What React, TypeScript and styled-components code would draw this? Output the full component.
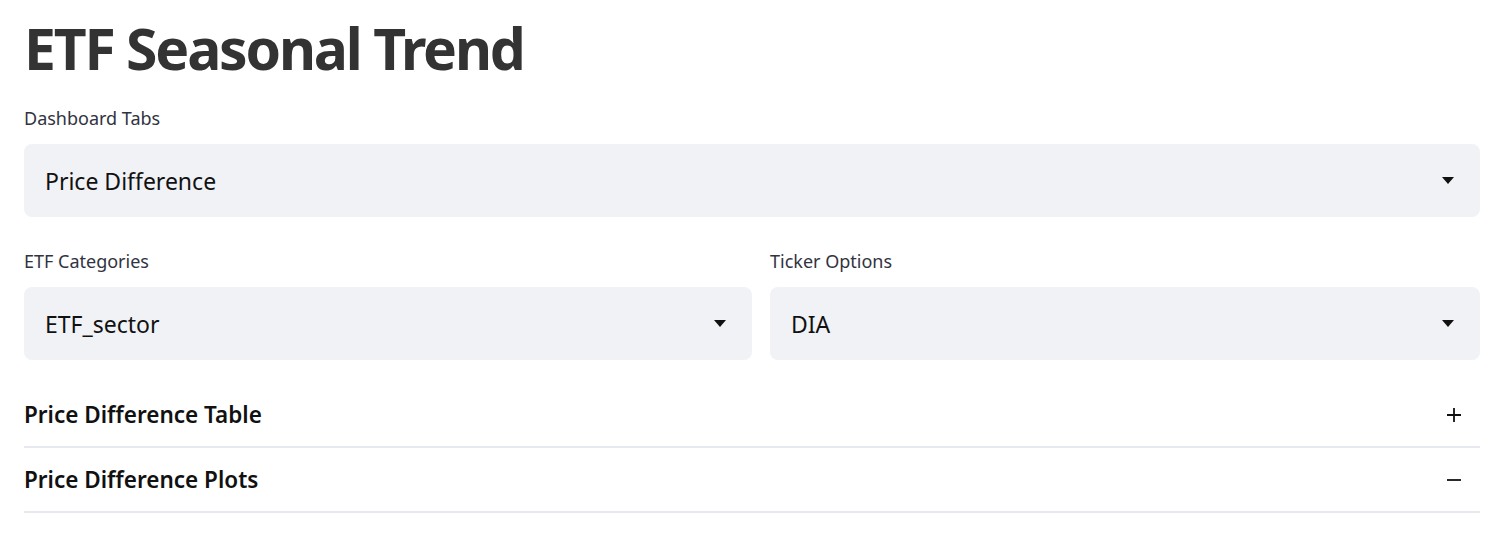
import { createGlobalStyle, styled } from "styled-components"

const Global = createGlobalStyle`
    body {
        margin: 0;
        background: #ffffff;
        font-family: "Noto Sans", "Open Sans", sans-serif;
        color: #31333f;
    }
`

const Page = styled.div`
    padding: 12px 20px 0 24px;
`

const Title = styled.h1`
    font-size: 57px;
    font-weight: 700;
    line-height: 72px;
    margin: 0 0 22px;
    color: #333333;
    letter-spacing: -2.2px;
`

const Field = styled.div`
    display: flex;
    flex-direction: column;
    gap: 14px;
    margin-bottom: 32px;
`

const Label = styled.label`
    font-size: 18px;
    line-height: 24px;
    color: #31333f;
`

const Select = styled.div`
    display: flex;
    align-items: center;
    justify-content: space-between;
    height: 73px;
    padding: 0 26px 0 21px;
    box-sizing: border-box;
    background: #f0f2f6;
    border-radius: 8px;
    font-size: 23px;
    color: #111111;
`

const Row = styled.div`
    display: grid;
    grid-template-columns: 728fr 710fr;
    gap: 18px;
    margin-top: 1px;
`

const Caret = () => (
    <svg width="12" height="7" viewBox="0 0 12 7">
        <path d="M0 0 L12 0 L6 7 Z" fill="#111111" />
    </svg>
)

const Expanders = styled.div`
    margin-top: -9px;
`

const Expander = styled.div`
    display: flex;
    align-items: center;
    justify-content: space-between;
    height: 63px;
    padding: 0 18px 0 0;
    border-bottom: 2px solid #e6e9ef;
    font-size: 22.5px;
    font-weight: 600;
    color: #111111;
`

const Sign = ({ open }: { open: boolean }) => (
    <svg width="16" height="16" viewBox="0 0 16 16">
        <path d={open ? "M1 8 H15" : "M1 8 H15 M8 1 V15"} stroke="#111111" strokeWidth="1.8" />
    </svg>
)

export default () => <>
    <Global />
    <Page>
        <Title>ETF Seasonal Trend</Title>
        <Field>
            <Label>Dashboard Tabs</Label>
            <Select>Price Difference<Caret /></Select>
        </Field>
        <Row>
            <Field>
                <Label>ETF Categories</Label>
                <Select>ETF_sector<Caret /></Select>
            </Field>
            <Field>
                <Label>Ticker Options</Label>
                <Select>DIA<Caret /></Select>
            </Field>
        </Row>
        <Expanders>
            <Expander>Price Difference Table<Sign open={false} /></Expander>
            <Expander>Price Difference Plots<Sign open={true} /></Expander>
        </Expanders>
    </Page>
</>
